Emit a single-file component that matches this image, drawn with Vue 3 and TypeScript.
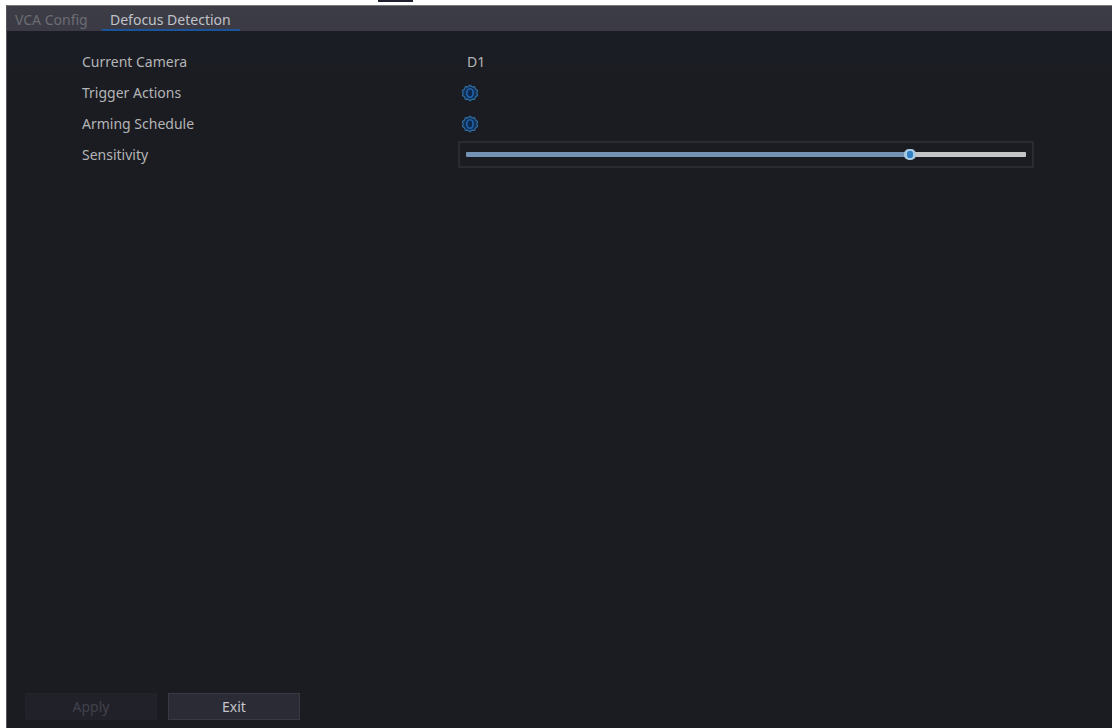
<script setup lang="ts">
import { ref } from 'vue'

const sensitivity = ref<number>(80)
const camera = 'D1'
const actions = [
  { id: 'trigger', label: 'Trigger Actions' },
  { id: 'arming', label: 'Arming Schedule' },
]
</script>

<template>
  <div class="screen">
    <div class="strip"><span class="notch"></span></div>
    <main class="window">
      <nav class="tabs">
        <a class="tab" href="#vca">VCA Config</a>
        <a class="tab active" href="#defocus" aria-current="page">Defocus Detection</a>
      </nav>
      <form class="form" @submit.prevent>
        <div class="row">
          <span class="label">Current Camera</span>
          <span class="value">{{ camera }}</span>
        </div>
        <div v-for="item in actions" :key="item.id" class="row">
          <span :id="item.id" class="label">{{ item.label }}</span>
          <button class="gear" type="button" :aria-labelledby="item.id">
            <svg viewBox="0 0 18 18" width="18" height="18" fill="none">
              <path
                d="M9 1.2 11 2.8 13.6 2.6 14.4 5.1 16.6 6.6 15.8 9 16.6 11.4 14.4 12.9 13.6 15.4 11 15.2 9 16.8 7 15.2 4.4 15.4 3.6 12.9 1.4 11.4 2.2 9 1.4 6.6 3.6 5.1 4.4 2.6 7 2.8Z"
                fill="#132f52"
                stroke="#2f6c9f"
                stroke-width="1.2"
                stroke-linejoin="round"
              />
              <ellipse cx="9" cy="9" rx="3.2" ry="4.2" fill="#10284a" stroke="#1f66b4" stroke-width="1.6" />
            </svg>
          </button>
        </div>
        <div class="row">
          <label class="label" for="sensitivity">Sensitivity</label>
          <div class="slider-box">
            <input
              id="sensitivity"
              v-model.number="sensitivity"
              class="slider"
              type="range"
              min="0"
              max="100"
              :style="{ '--fill': sensitivity + '%' }"
            />
          </div>
        </div>
      </form>
      <footer class="footer">
        <button class="btn" type="button" disabled>Apply</button>
        <button class="btn" type="button">Exit</button>
      </footer>
    </main>
  </div>
</template>

<style>
body {
  margin: 0;
  background: #ffffff;
}
</style>

<style scoped>
.screen {
  display: flex;
  flex-direction: column;
  min-height: 100vh;
  box-sizing: border-box;
  padding-left: 6px;
  font-family: "Noto Sans", "Open Sans", sans-serif;
  font-size: 14px;
  line-height: 18px;
  color: #b4b5b7;
}
.strip {
  height: 5px;
}
.notch {
  display: block;
  width: 35px;
  height: 2px;
  margin-left: 372px;
  background: #20212f;
}
.window {
  flex: 1;
  display: flex;
  flex-direction: column;
  background: #1b1c21;
  border-left: 1px solid #55565a;
}
.tabs {
  display: flex;
  height: 26px;
  box-sizing: border-box;
  border-top: 1px solid #77787b;
  background: linear-gradient(#3c3d45, #3b3a46);
}
.tab {
  box-sizing: border-box;
  width: 95px;
  height: 25px;
  padding: 5px 8px 0;
  color: #6c6d73;
  text-decoration: none;
  white-space: nowrap;
}
.tab.active {
  width: 138px;
  color: #c0c2c7;
  border-bottom: 2px solid #1a5599;
}
.form {
  flex: 1;
  padding: 15px 78px 0 75px;
  background: linear-gradient(#1a1d24, #1b1c21 80px);
}
.row {
  display: flex;
  align-items: center;
  height: 31px;
}
.label {
  flex: none;
  width: 376px;
}
.value {
  padding-left: 9px;
}
.gear {
  display: flex;
  padding: 0;
  margin-left: 3px;
  border: 0;
  background: none;
}
.slider-box {
  flex: 1;
  display: flex;
  align-items: center;
  box-sizing: border-box;
  height: 27px;
  padding: 0 6px;
  border: 2px solid #2a2b2f;
}
.slider {
  appearance: none;
  width: 100%;
  height: 12px;
  margin: 0;
  background: none;
}
.slider::-webkit-slider-runnable-track {
  height: 5px;
  border-radius: 1px;
  background: linear-gradient(to right, #7392b4 var(--fill), #c4c5c6 var(--fill));
}
.slider::-webkit-slider-thumb {
  appearance: none;
  box-sizing: border-box;
  width: 12px;
  height: 11px;
  margin-top: -3px;
  border: solid #a9c9e2;
  border-width: 2px 3px;
  border-radius: 5px;
  background: #2f7fc4;
}
.footer {
  display: flex;
  gap: 11px;
  padding: 0 18px 8px;
}
.btn {
  width: 132px;
  height: 27px;
  padding: 0;
  border: 1px solid #393944;
  background: #2b2b36;
  color: #c3c3c8;
  font: inherit;
}
.btn:disabled {
  border-color: #22222a;
  background: #21212a;
  color: #42424a;
}
</style>
